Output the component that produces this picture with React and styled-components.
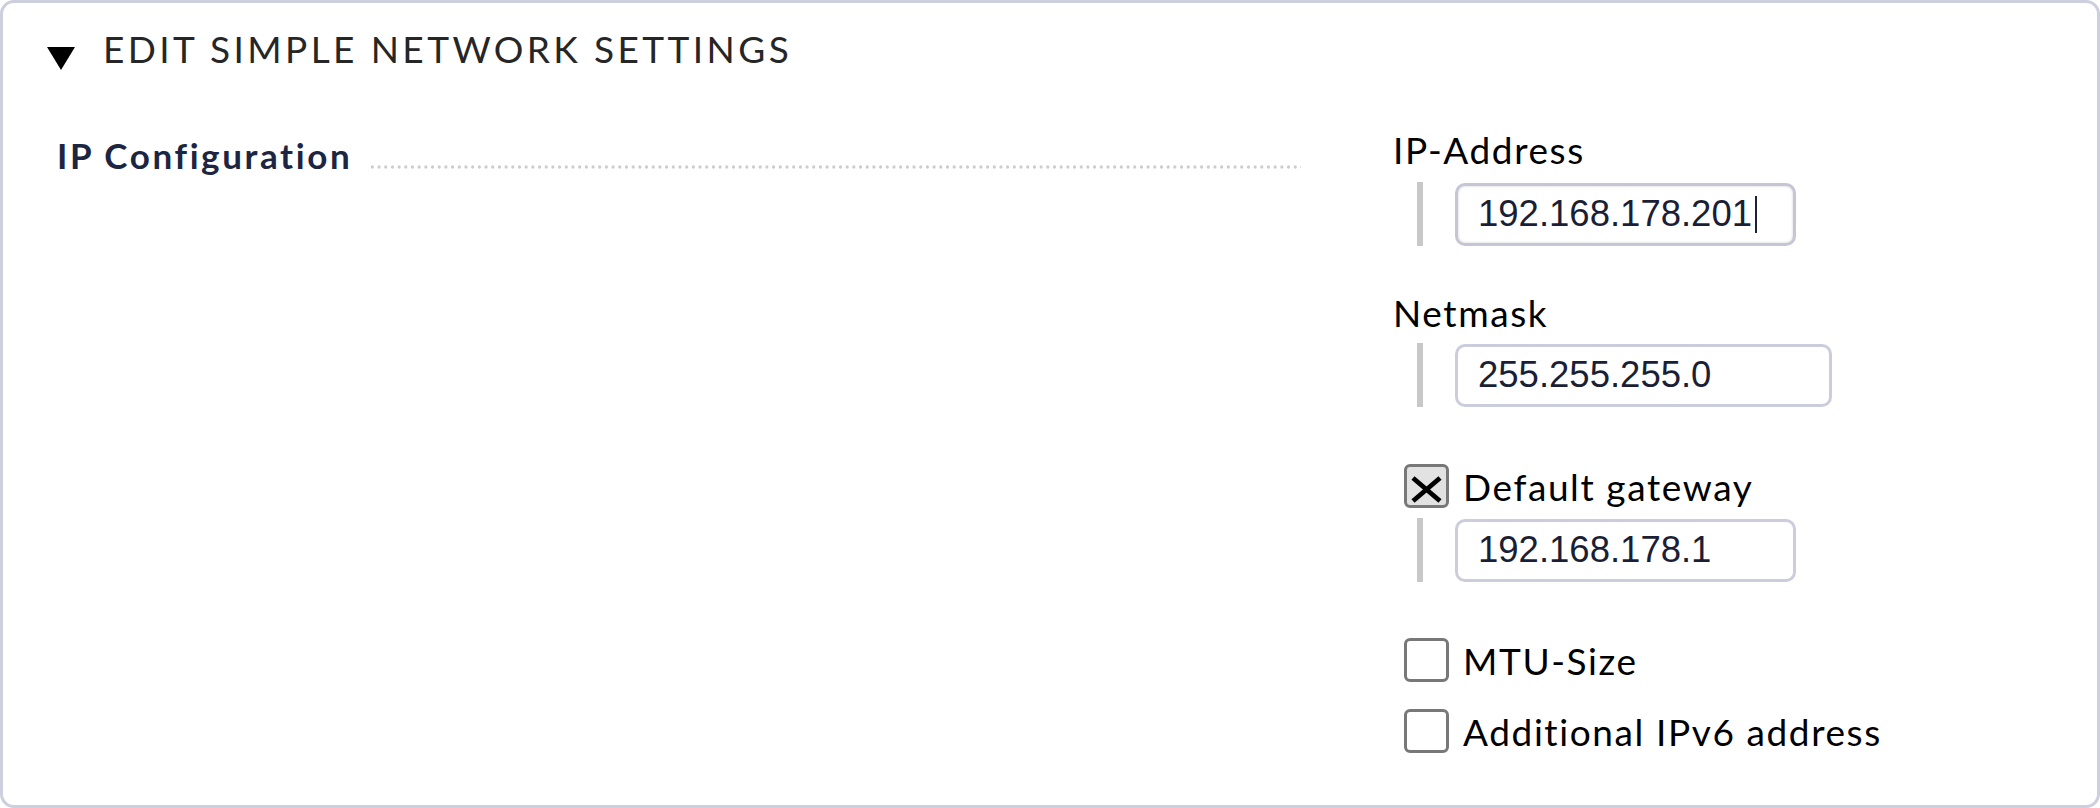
import React from "react";
import styled, { createGlobalStyle, css } from "styled-components";

const GlobalStyle = createGlobalStyle`
  html, body {
    margin: 0;
    padding: 0;
    background: #ffffff;
  }
  body {
    font-family: Lato, "Noto Sans", sans-serif;
  }
`;

const Panel = styled.section`
  box-sizing: border-box;
  width: 2100px;
  height: 808px;
  border: 3px solid #cdcfdf;
  border-radius: 14px;
  background: #ffffff;
  overflow: hidden;
`;

const Header = styled.div`
  display: flex;
  align-items: flex-start;
  padding: 27px 0 0 44px;
`;

const Toggle = styled.svg`
  flex: none;
  margin-top: 17px;
`;

const HeaderTitle = styled.h2`
  margin: 0 0 0 28px;
  font: 400 37px/1 Lato, "Noto Sans", sans-serif;
  letter-spacing: 3.4px;
  color: #262626;
  white-space: nowrap;
`;

const Body = styled.div`
  display: grid;
  grid-template-columns: 1336px 1fr;
  padding-left: 54px;
`;

const LegendCell = styled.div`
  display: flex;
  align-items: flex-end;
  height: 35px;
  margin-top: 68px;
  padding-right: 92px;
`;

const Legend = styled.span`
  font: 700 35px/1 Lato, "Noto Sans", sans-serif;
  letter-spacing: 2.6px;
  color: #1c2541;
  white-space: nowrap;
`;

const Leader = styled.span`
  flex: 1;
  height: 4px;
  margin: 0 0 4px 17px;
  background-image: radial-gradient(circle, #cccccc 1.4px, transparent 1.9px);
  background-size: 6.7px 4px;
  background-repeat: repeat-x;
`;

const Fields = styled.div`
  display: flex;
  flex-direction: column;
  margin-top: 61px;
`;

const Group = styled.div`
  display: flex;
  flex-direction: column;
  margin-top: ${(p) => p.$gap || 0}px;
`;

const FieldLabel = styled.div`
  font: 400 37px/1 Lato, "Noto Sans", sans-serif;
  letter-spacing: 1.6px;
  color: #000000;
  white-space: nowrap;
`;

const Indent = styled.div`
  display: flex;
  align-items: center;
  height: 64px;
  margin-top: ${(p) => p.$gap}px;
`;

const Rule = styled.div`
  align-self: stretch;
  width: 6px;
  margin-left: 24px;
  background: #c8c8c8;
`;

const TextField = styled.div`
  box-sizing: border-box;
  display: flex;
  align-items: center;
  width: ${(p) => p.$width}px;
  height: 63px;
  margin-left: 32px;
  padding-left: 20px;
  border: 3px solid #cbcddd;
  border-radius: 10px;
  background: #ffffff;
  font: 400 36.5px/1 "Liberation Sans", Arial, sans-serif;
  color: #1a1f36;
  white-space: nowrap;
  ${(p) =>
    p.$focused &&
    css`
      border-color: #c4c6d6;
      box-shadow: inset 0 0 3px rgba(0, 0, 0, 0.18);
    `}
`;

const Caret = styled.span`
  display: inline-block;
  width: 2px;
  height: 37px;
  margin-left: 3px;
  background: #1d2136;
`;

const CheckRow = styled.div`
  display: flex;
  align-items: center;
  gap: 14px;
  margin-top: ${(p) => p.$gap || 0}px;
  padding-left: 11px;
  font: 400 37px/1 Lato, "Noto Sans", sans-serif;
  letter-spacing: 1.6px;
  color: #000000;
  white-space: nowrap;
`;

const CheckBox = styled.span`
  box-sizing: border-box;
  display: flex;
  align-items: center;
  justify-content: center;
  flex: none;
  width: 45px;
  height: 44px;
  border: 3px solid #787878;
  border-radius: 6px;
  background: ${(p) => (p.$checked ? "#e2e2e2" : "#ffffff")};
`;

const Cross = () => (
  <svg width="39" height="38" viewBox="0 0 39 38">
    <path
      d="M6 11 L33 34 M33 11 L6 34"
      stroke="#000"
      strokeWidth="4.8"
      strokeLinecap="butt"
      fill="none"
    />
  </svg>
);

export default function App() {
  return (
    <>
      <GlobalStyle />
      <Panel>
        <Header>
          <Toggle width="28" height="23" viewBox="0 0 28 23">
            <path d="M0 0 H28 L14 23 Z" fill="#000" />
          </Toggle>
          <HeaderTitle>EDIT SIMPLE NETWORK SETTINGS</HeaderTitle>
        </Header>
        <Body>
          <LegendCell>
            <Legend>IP Configuration</Legend>
            <Leader />
          </LegendCell>
          <Fields>
            <Group>
              <FieldLabel>IP-Address</FieldLabel>
              <Indent $gap={14}>
                <Rule />
                <TextField $width={341} $focused>
                  192.168.178.201
                  <Caret />
                </TextField>
              </Indent>
            </Group>
            <Group $gap={48}>
              <FieldLabel>Netmask</FieldLabel>
              <Indent $gap={12}>
                <Rule />
                <TextField $width={377}>255.255.255.0</TextField>
              </Indent>
            </Group>
            <Group $gap={57}>
              <CheckRow>
                <CheckBox $checked>
                  <Cross />
                </CheckBox>
                Default gateway
              </CheckRow>
              <Indent $gap={10}>
                <Rule />
                <TextField $width={341}>192.168.178.1</TextField>
              </Indent>
            </Group>
            <CheckRow $gap={56}>
              <CheckBox />
              MTU-Size
            </CheckRow>
            <CheckRow $gap={27}>
              <CheckBox />
              Additional IPv6 address
            </CheckRow>
          </Fields>
        </Body>
      </Panel>
    </>
  );
}
